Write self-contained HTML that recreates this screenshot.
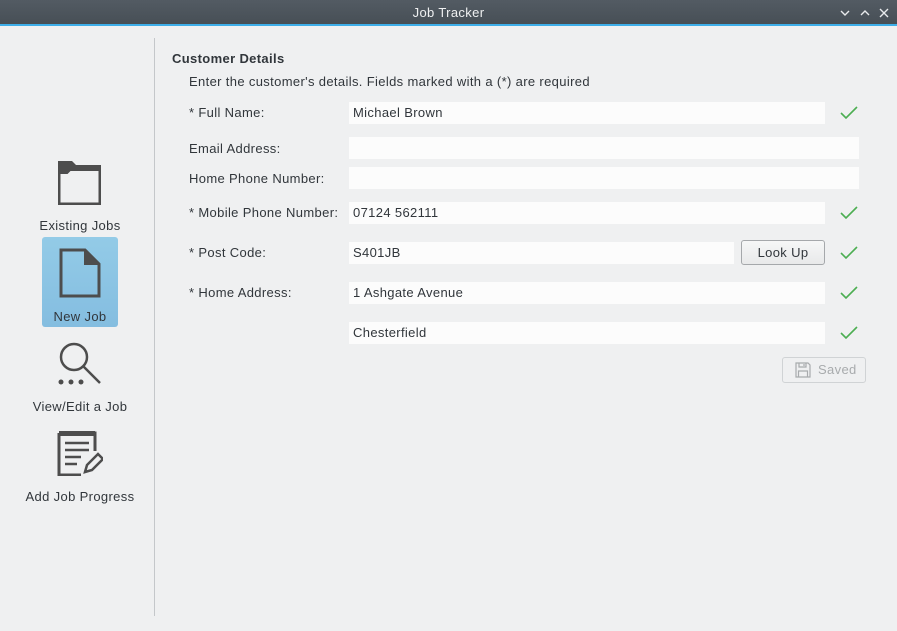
<!DOCTYPE html>
<html><head><meta charset="utf-8"><style>
*{margin:0;padding:0;box-sizing:border-box}
body{width:897px;height:631px;overflow:hidden;background:#eff0f1;font-family:"Liberation Sans","DejaVu Sans",sans-serif;font-size:13px;color:#31363b;position:relative;letter-spacing:0.35px}
.tb{position:absolute;left:0;top:0;width:897px;height:26px;background:linear-gradient(#535b63,#474f56);border-bottom:2px solid #3daee9;color:#eff0f1;text-align:center;line-height:25px;font-size:13px}
.a{position:absolute}
.sep{position:absolute;left:154px;top:38px;width:1px;height:578px;background:#c4c7ca}
.lbl{position:absolute;left:189px;font-size:13px}
.in{position:absolute;left:349px;height:22px;background:#fcfcfc;padding-left:4px;line-height:22px}
.ck{position:absolute;left:840px}
.side{position:absolute;text-align:center;width:150px;font-size:13px;white-space:nowrap;left:5px}
</style></head><body>
<div class="tb">Job Tracker
<svg class="a" style="left:838px;top:7px" width="52" height="12" viewBox="0 0 52 12" fill="none" stroke="#e8eaec" stroke-width="1.4"><path d="M3 4l4 4 4-4"/><path d="M23 8l4-4 4 4"/><path d="M42 2l8 8M50 2l-8 8"/></svg>
</div>
<div class="sep"></div>

<svg class="a" style="left:57px;top:160px" width="46" height="46" viewBox="0 0 46 46"><path d="M1 1h14l4 4h25v40H1z" fill="#4d4d4d"/><path d="M3.5 14h7l3-3h28v31.5h-38z" fill="#eff0f1"/></svg>
<div class="side" style="top:218px">Existing Jobs</div>

<div class="a" style="left:42px;top:237px;width:76px;height:90px;background:linear-gradient(#93cbe7,#84bde0);border-radius:3px"></div>
<svg class="a" style="left:59px;top:248px" width="42" height="50" viewBox="0 0 42 50"><path d="M2 2h24l14 14v32H2z" fill="none" stroke="#4d4d4d" stroke-width="3"/><path d="M25 1l16 16H25z" fill="#4d4d4d"/></svg>
<div class="side" style="top:309px">New Job</div>

<svg class="a" style="left:56px;top:340px" width="48" height="46" viewBox="0 0 48 46"><circle cx="18" cy="17" r="13" fill="none" stroke="#4d4d4d" stroke-width="2.5"/><path d="M27 26l17 17" stroke="#4d4d4d" stroke-width="2.5"/><circle cx="5" cy="42" r="2.5" fill="#4d4d4d"/><circle cx="15" cy="42" r="2.5" fill="#4d4d4d"/><circle cx="25" cy="42" r="2.5" fill="#4d4d4d"/></svg>
<div class="side" style="top:399px">View/Edit a Job</div>

<svg class="a" style="left:57px;top:430px" width="46" height="46" viewBox="0 0 46 46"><path d="M2 3h36v18M2 3v42h22" fill="none" stroke="#4d4d4d" stroke-width="3"/><rect x="2" y="1" width="36" height="5" fill="#4d4d4d"/><path d="M8 13h24M8 20h24M8 27h16M8 34h12" stroke="#4d4d4d" stroke-width="2.5"/><path d="M28 42l2-7 11-11 5 5-11 11z" fill="none" stroke="#4d4d4d" stroke-width="2.5"/></svg>
<div class="side" style="top:489px">Add Job Progress</div>

<div class="a" style="left:172px;top:51px;font-weight:bold">Customer Details</div>
<div class="a" style="left:189px;top:74px">Enter the customer's details. Fields marked with a (*) are required</div>

<div class="lbl" style="top:105px">* Full Name:</div>
<div class="in" style="top:102px;width:476px">Michael Brown</div>
<div class="lbl" style="top:141px">Email Address:</div>
<div class="in" style="top:137px;width:510px"></div>
<div class="lbl" style="top:171px">Home Phone Number:</div>
<div class="in" style="top:167px;width:510px"></div>
<div class="lbl" style="top:205px">* Mobile Phone Number:</div>
<div class="in" style="top:202px;width:476px">07124 562111</div>
<div class="lbl" style="top:245px">* Post Code:</div>
<div class="in" style="top:242px;width:385px">S401JB</div>
<div class="a" style="left:741px;top:240px;width:84px;height:25px;border:1px solid #a5a8ab;border-radius:3px;background:linear-gradient(#f6f7f7,#e8e9ea);text-align:center;line-height:23px">Look Up</div>
<div class="lbl" style="top:285px">* Home Address:</div>
<div class="in" style="top:282px;width:476px">1 Ashgate Avenue</div>
<div class="in" style="top:322px;width:476px">Chesterfield</div>

<svg class="ck" style="top:105px" width="18" height="16"><path d="M1 8l5 5L17 2" fill="none" stroke="#4cae52" stroke-width="1.6"/></svg>
<svg class="ck" style="top:205px" width="18" height="16"><path d="M1 8l5 5L17 2" fill="none" stroke="#4cae52" stroke-width="1.6"/></svg>
<svg class="ck" style="top:245px" width="18" height="16"><path d="M1 8l5 5L17 2" fill="none" stroke="#4cae52" stroke-width="1.6"/></svg>
<svg class="ck" style="top:285px" width="18" height="16"><path d="M1 8l5 5L17 2" fill="none" stroke="#4cae52" stroke-width="1.6"/></svg>
<svg class="ck" style="top:325px" width="18" height="16"><path d="M1 8l5 5L17 2" fill="none" stroke="#4cae52" stroke-width="1.6"/></svg>

<div class="a" style="left:782px;top:357px;width:84px;height:26px;border:1px solid #d0d3d5;border-radius:3px;background:#eff0f1;color:#a8abad;line-height:24px;padding-left:35px">Saved</div>
<svg class="a" style="left:795px;top:362px" width="16" height="16" viewBox="0 0 16 16" fill="none" stroke="#a8abad" stroke-width="1.2"><path d="M1 1h12l2 2v12H1z"/><path d="M4 1v4h7V1M9 2v2M3.5 15V9h9v6"/></svg>
</body></html>
